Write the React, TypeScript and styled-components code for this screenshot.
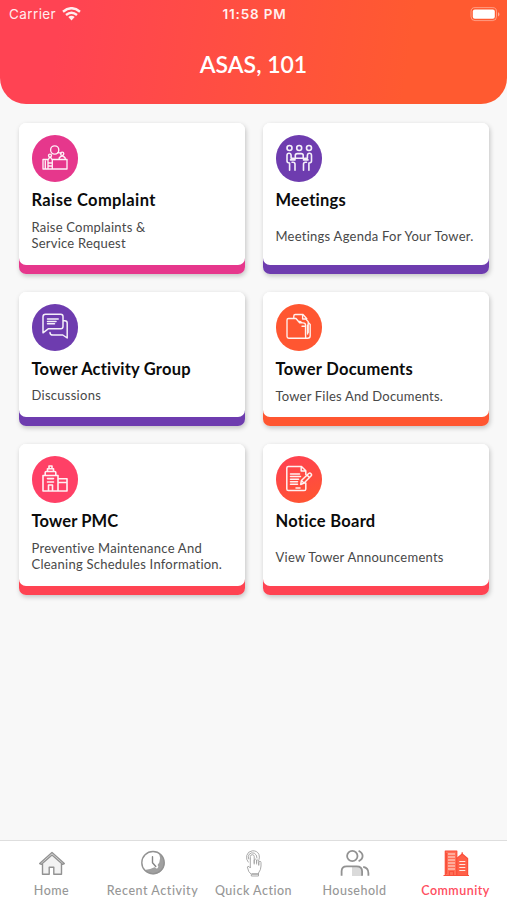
import React from "react";
import styled, { createGlobalStyle } from "styled-components";

const GlobalStyle = createGlobalStyle`
  * { box-sizing: border-box; }
  body { margin: 0; background: #f8f8f8; font-family: Lato, "Open Sans", sans-serif; }
  h1, h2, p { margin: 0; }
`;

const Screen = styled.div`
  width: 507px;
  height: 900px;
  display: flex;
  flex-direction: column;
  overflow: hidden;
  background: #f8f8f8;
`;

const Header = styled.header`
  height: 104px;
  flex: none;
  border-radius: 0 0 26px 26px;
  background: linear-gradient(98deg, #ff4353 12%, #ff5a30 80%);
  color: #fff;
`;

const StatusBar = styled.div`
  height: 28px;
  padding: 0 6px 0 9px;
  display: grid;
  grid-template-columns: 1fr auto 1fr;
  align-items: center;
  font-family: Inter, sans-serif;
  font-size: 13.5px;
  line-height: 28px;
`;

const Carrier = styled.div`
  display: flex;
  align-items: center;
  gap: 5.5px;
  letter-spacing: 0.4px;
  opacity: 0.9;
`;

const Time = styled.div`
  font-weight: 600;
  font-size: 13.5px;
  letter-spacing: 0.8px;
  text-indent: -1px;
  opacity: 0.92;
`;

const Battery = styled.svg`
  justify-self: end;
`;

const Title = styled.h1`
  margin-top: 20px;
  text-align: center;
  font-size: 23px;
  line-height: 32px;
  font-weight: 600;
  letter-spacing: 0;
`;

const Cards = styled.main`
  flex: 1;
  padding: 19px 18px 0 19px;
  display: grid;
  grid-template-columns: 226px 226px;
  grid-template-rows: 151px 134px 151px;
  column-gap: 18px;
  row-gap: 18px;
`;

const CardEdge = styled.section<{ $color: string }>`
  padding-bottom: 9px;
  border-radius: 7px;
  background: linear-gradient(#fff 50%, ${(p) => p.$color} 50%);
  box-shadow: 1px 2px 5px rgba(0, 0, 0, 0.22);
`;

const CardFace = styled.div`
  height: 100%;
  padding: 12px 0 0 12.5px;
  border-radius: 7px;
  background: #fff;
`;

const IconDisc = styled.div<{ $fill: string }>`
  width: 46.5px;
  height: 46.5px;
  border-radius: 50%;
  display: grid;
  place-items: center;
  background: ${(p) => p.$fill};
`;

const CardTitle = styled.h2<{ $spacing: number }>`
  margin-top: 7.5px;
  font-size: 16.5px;
  line-height: 22px;
  font-weight: 700;
  color: #0b0b0b;
  white-space: nowrap;
  letter-spacing: ${(p) => p.$spacing}px;
`;

const Description = styled.p<{ $top: number; $spacing: number }>`
  margin-top: ${(p) => p.$top}px;
  font-size: 13px;
  line-height: 16px;
  color: #484848;
  white-space: pre;
  letter-spacing: ${(p) => p.$spacing}px;
`;

const LineIcon = styled.svg<{ $weight?: number }>`
  display: block;
  fill: none;
  stroke: #fff;
  stroke-width: ${(p) => p.$weight ?? 1.35};
  stroke-linecap: round;
  stroke-linejoin: round;
  stroke-opacity: 0.92;
`;

const TabBar = styled.nav`
  height: 60px;
  flex: none;
  display: grid;
  grid-template-columns: repeat(5, 1fr);
  padding: 0 1px;
  border-top: 1px solid #dedede;
  background: #fff;
`;

const Tab = styled.div<{ $active?: boolean; $spacing: number }>`
  display: flex;
  flex-direction: column;
  align-items: center;
  padding-top: 8px;
  font-size: 12.5px;
  line-height: 18px;
  font-weight: ${(p) => (p.$active ? 600 : 500)};
  color: ${(p) => (p.$active ? "#ff4d60" : "#979797")};
  letter-spacing: ${(p) => p.$spacing}px;
  white-space: nowrap;
`;

const TabIcon = styled.svg<{ $weight?: number; $tone?: string }>`
  display: block;
  margin-bottom: 5px;
  fill: none;
  stroke: ${(p) => p.$tone ?? "#929292"};
  stroke-width: ${(p) => p.$weight ?? 1.4};
  stroke-linejoin: round;
  stroke-linecap: round;
`;

const ComplaintIcon = () => (
  <LineIcon width="28" height="28" viewBox="0 0 28 28">
    <circle cx="13.7" cy="6" r="4.1" />
    <path d="m17 8.6 3.2.5M6.5 15.5H2V25H26V15.5H11.5M4.3 17v8M7 25v-9l1.4-2.4h1.4L11.3 16v9M7 19h4M7 22h4" />
    <circle cx="9" cy="11.6" r="1.5" />
    <circle cx="21.2" cy="9.7" r="1.6" />
    <path d="M18.2 15v-1q3-4 6 0v1" />
  </LineIcon>
);

const MeetingIcon = () => (
  <LineIcon width="28" height="28" viewBox="0 0 28 28" $weight={1.6}>
    <circle cx="4.5" cy="4" r="2.5" />
    <circle cx="14.2" cy="4" r="2.5" />
    <circle cx="24" cy="4" r="2.5" />
    <path d="M10.3 13.6v-2q0-2 2-2h3.9q2 0 2 2v2M10 14.3h8.5M2 17v-5.5q0-2.2 2-2.2t2.1 2.2v2.7h2.2q1.7 0 1.7 1.7H5.5M2 17q0 2 2.6 2v7.3M7 18.2h1q2 0 2 2v6.1M26.5 17v-5.5q0-2.2-2-2.2t-2.1 2.2v2.7h-2.2q-1.7 0-1.7 1.7H23M26.5 17q0 2-2.6 2v7.3M21.5 18.2h-1q-2 0-2 2v6.1" />
  </LineIcon>
);

const ChatIcon = () => (
  <LineIcon width="28" height="28" viewBox="0 0 28 28" $weight={1.5}>
    <path d="M4.5 1.3h15.2q2.3 0 2.3 2.3v9.8q0 2.3-2.3 2.3H7.5L2 19.8V3.8q0-2.5 2.5-2.5zM6.5 6h10.7M6.5 8.4H15M6.5 10.8h7M22.5 7.7h1.3q2.4 0 2.4 2.4V25l-4.4-3H12q-3 0-3-2.6" />
  </LineIcon>
);

const DocumentsIcon = () => (
  <LineIcon width="28" height="28" viewBox="0 0 28 28">
    <path d="M3.5 5.5H11l3.6 4.3H18q2.6 0 2.6 2.4v13H3.8Q2 25.2 2 23.4V7q0-1.5 1.5-1.5zM8.8 5.2V3q0-1.5 1.5-1.5H18l3.8 4.3M17.6 1.8V6h4M14.8 8.3l2 1.2M21 6.3l2.2 2.3v11M23.3 9.5l1.9 2v11.2q0 2.5-2.6 2.5h-2M17 13.2h3.5v9M22.6 12v9" />
  </LineIcon>
);

const TowerIcon = () => (
  <LineIcon width="28" height="28" viewBox="0 0 28 28" $weight={1.6}>
    <path d="M2 26V10.5h15V26zM4.2 10V7.5q0-1 1-1h8.6q1 0 1 1V10M6.5 6V3.8h6V6M8 3.5V1h3v2.5M17.5 13.8H26V26h-9M7.5 26v-6h4v6M6.5 13.6h6M6.5 17h6M17 17.5h8.5" />
  </LineIcon>
);

const NoticeIcon = () => (
  <LineIcon width="28" height="28" viewBox="0 0 28 28" $weight={1.5}>
    <path d="M20.8 9.6V5.7L16.5 1.5H3.4q-1.6 0-1.6 1.6v20.8q0 1.7 1.6 1.7h15.8q1.6 0 1.6-1.6v-6M16.2 1.6V6h4.5M5.5 9h9M5.5 11.6h10M5.5 14.2h8M5.5 16.8h7M5.5 19.2h7M11 23h4M15.7 19.5l.7-4 7.3-7q1.2-1 2.3.2t0 2.3l-6.9 7zM16.4 15.5l2.8 2.7M22 10l2.3 2.3" />
  </LineIcon>
);

const HomeIcon = () => (
  <TabIcon width="28" height="28" viewBox="0 0 28 28">
    <path fill="#f2f2f2" stroke="none" d="M5 13 14 5l9 8v12H5z" />
    <path fill="#fff" stroke="none" d="M11.2 18.3h4.6v7h-4.6z" />
    <path d="m1.7 14.5 12.3-11 12.3 11-1.7.8L14 6 3.4 15.3zM4.5 14.5V25.3h6.7v-7h4.6v7h7.7V14.5" />
  </TabIcon>
);

const RecentIcon = () => (
  <TabIcon width="28" height="28" viewBox="0 0 28 28">
    <path fill="#a0a0a0" stroke="none" d="M20 4.3A11.2 11.2 0 1 1 5.6 21l5.5-1 6.4-2.5 2.8-4 .8-4.5z" />
    <circle cx="14" cy="13.7" r="11.2" />
    <path d="M14 7.7v6l3.6 4" stroke="#fff" strokeWidth="3.4" />
    <path d="M13.5 7.7v6l3.3 3.8" stroke="#858585" />
  </TabIcon>
);

const TouchIcon = () => (
  <TabIcon width="28" height="28" viewBox="0 0 28 28" $weight={0.9} $tone="#a0a0a0">
    <path d="M8.2 13.1Q5.9 10.5 6.7 6.6 7.7 2.4 12.3 1.8 17 1.5 18.9 5.3q1 2.9.2 5.1M8.6 9.9Q7.7 6.9 9.3 5.2 11.5 3 14.3 4.2 17 5.4 17 9M10.3 10V7.4q.2-1.7 2-1.7t1.9 1.7V15M10.3 10v9l-1.1-1.3Q7.8 16.7 7.3 18q1 5.5 4 7.3V27h7.2v-3q2.5-3.2 2.5-7v-3.5q0-1.2-1.1-1.2t-1.2 1.2V16M14.2 14v-3q1.2-1.8 2.4 0v4M16.6 13.6v-2q1.1-1.4 2.2 0V16" />
    <path d="M12 25h6" strokeWidth="1.6" />
  </TabIcon>
);

const HouseholdIcon = () => (
  <TabIcon width="30" height="28" viewBox="0 0 30 28" $weight={1.8}>
    <circle cx="12.3" cy="7" r="5.2" />
    <path fill="#dadada" stroke="none" d="M12 17h7l3 3v7H12z" />
    <path strokeLinecap="butt" d="M1.6 26.8v-4.5q0-5 5-5h10q5.5 0 5.5 5v4.5M18.6 1.8q4 2 4 5.2t-4 5.2M23.2 17.8q5.2 1 5.2 6.2v2.8" />
  </TabIcon>
);

const CommunityIcon = () => (
  <TabIcon width="28" height="28" viewBox="0 0 28 28">
    <g stroke="#fa4f3a" strokeWidth="1.2" strokeLinecap="butt">
      <path fill="#ff6f57" d="M3.3 26V2h11.5v24" />
      <path fill="#ff6048" d="M14.8 26V9.5L20.2 5l5.4 4.5V26M1.5 26.5H27" />
      <path stroke="#ffe7e0" d="M6 5h7M6 8h7M6 11h7M6 14h7M6 17h7M6 20h7M17.3 12.5h6M17.3 15.5h6M17.3 18.5h6M17.3 21.5h6" />
      <path d="M7.5 26v-3.5h4V26M20.2 5V3.3M4.5 4v21" />
    </g>
  </TabIcon>
);

const cards = [
  { title: "Raise Complaint", text: "Raise Complaints &\nService Request", color: "#e6378c", Icon: ComplaintIcon, top: 8, ts: 0.38, ds: 0.22 },
  { title: "Meetings", text: "Meetings Agenda For Your Tower.", color: "#6e3caf", Icon: MeetingIcon, top: 17, ts: 0.25, ds: 0.25 },
  { title: "Tower Activity Group", text: "Discussions", color: "#6e3caf", Icon: ChatIcon, top: 7, ts: 0.2, ds: 0.27 },
  { title: "Tower Documents", text: "Tower Files And Documents.", color: "#ff5631", Icon: DocumentsIcon, top: 8, ts: 0.28, ds: 0.2 },
  { title: "Tower PMC", text: "Preventive Maintenance And\nCleaning Schedules Information.", color: "#ff4352", disc: "#ff4066", Icon: TowerIcon, top: 8, ts: 0.12, ds: 0.24 },
  { title: "Notice Board", text: "View Tower Announcements", color: "#ff4352", disc: "linear-gradient(160deg, #ff4054, #ff562e)", Icon: NoticeIcon, top: 17, ts: 0.28, ds: 0.24 },
];

const tabs = [
  { label: "Home", Icon: HomeIcon, spacing: 0.5 },
  { label: "Recent Activity", Icon: RecentIcon, spacing: 0.55 },
  { label: "Quick Action", Icon: TouchIcon, spacing: 0.5 },
  { label: "Household", Icon: HouseholdIcon, spacing: 0.5 },
  { label: "Community", Icon: CommunityIcon, spacing: 0.45, active: true },
];

export default function App() {
  return (
    <Screen>
      <GlobalStyle />
      <Header>
        <StatusBar>
          <Carrier>
            Carrier
            <svg width="19" height="14" viewBox="0 0 19 14" fill="none" stroke="#fff" strokeWidth="2.4">
              <path d="M1 4.7q8.5-7 17 0M4 8q5.5-4.5 11 0" />
              <path d="m6.3 10 3.2 3.4 3.2-3.4q-3.2-2.5-6.4 0" fill="#fff" stroke="none" />
            </svg>
          </Carrier>
          <Time>11:58 PM</Time>
          <Battery width="31" height="15" viewBox="0 0 31 15">
            <rect x="1" y=".6" width="25.5" height="13" rx="4" fill="none" stroke="#fff" strokeOpacity=".4" />
            <rect x="2.8" y="2.4" width="22" height="9.4" rx="2" fill="#fff" />
            <path d="M28 5q3 2.3 0 4.6z" fill="#fff" opacity=".5" />
          </Battery>
        </StatusBar>
        <Title>ASAS, 101</Title>
      </Header>
      <Cards>
        {cards.map(({ title, text, color, disc, Icon, top, ts, ds }) => (
          <CardEdge key={title} $color={color}>
            <CardFace>
              <IconDisc $fill={disc ?? color}><Icon /></IconDisc>
              <CardTitle $spacing={ts}>{title}</CardTitle>
              <Description $top={top} $spacing={ds}>{text}</Description>
            </CardFace>
          </CardEdge>
        ))}
      </Cards>
      <TabBar>
        {tabs.map(({ label, Icon, spacing, active }) => (
          <Tab key={label} $active={active} $spacing={spacing}>
            <Icon />
            {label}
          </Tab>
        ))}
      </TabBar>
    </Screen>
  );
}
